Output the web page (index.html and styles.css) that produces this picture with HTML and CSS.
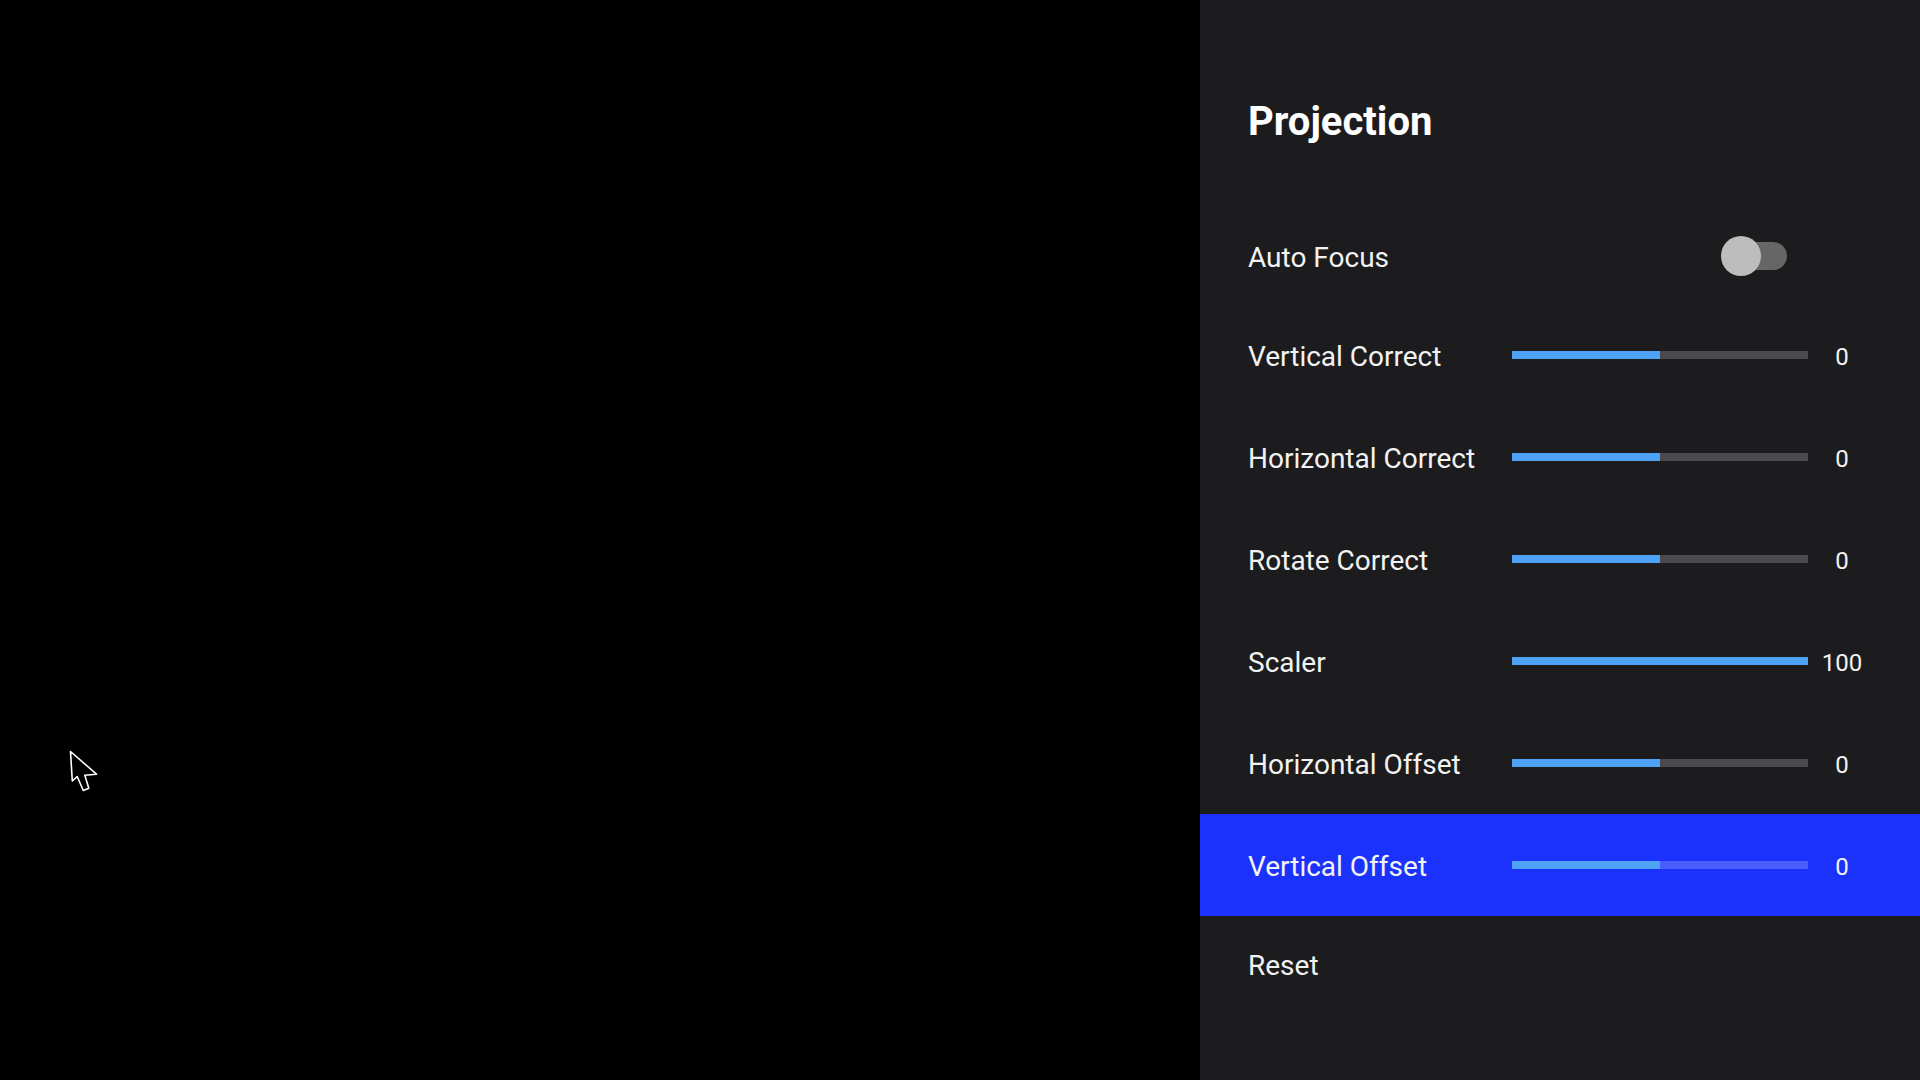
FILE: index.html
```html
<!DOCTYPE html>
<html>
<head>
<meta charset="utf-8">
<title>Projection</title>
<link rel="stylesheet" href="styles.css">
</head>
<body>
<div class="screen">
  <div class="stage">
    <svg class="cursor" width="32" height="44" viewBox="0 0 32 44">
      <path d="M1.5 1.5 L3.3 31 L8.2 26.5 L14.3 40.5 L19.8 38.2 L15.8 25.2 L27.5 24.2 Z" fill="#000" stroke="#fff" stroke-width="1.6" stroke-linejoin="round"/>
    </svg>
  </div>
  <aside class="panel">
    <h1 class="title">Projection</h1>
    <div class="row row-toggle">
      <span class="label">Auto Focus</span>
      <span class="switch"><span class="switch-track"></span><span class="switch-knob"></span></span>
    </div>
    <div class="row">
      <span class="label">Vertical Correct</span>
      <span class="bar"><span class="fill" style="width:50%"></span></span>
      <span class="value">0</span>
    </div>
    <div class="row">
      <span class="label">Horizontal Correct</span>
      <span class="bar"><span class="fill" style="width:50%"></span></span>
      <span class="value">0</span>
    </div>
    <div class="row">
      <span class="label">Rotate Correct</span>
      <span class="bar"><span class="fill" style="width:50%"></span></span>
      <span class="value">0</span>
    </div>
    <div class="row">
      <span class="label">Scaler</span>
      <span class="bar"><span class="fill" style="width:100%"></span></span>
      <span class="value">100</span>
    </div>
    <div class="row">
      <span class="label">Horizontal Offset</span>
      <span class="bar"><span class="fill" style="width:50%"></span></span>
      <span class="value">0</span>
    </div>
    <div class="row row-active">
      <span class="label">Vertical Offset</span>
      <span class="bar"><span class="fill" style="width:50%"></span></span>
      <span class="value">0</span>
    </div>
    <div class="row row-reset">
      <span class="label">Reset</span>
    </div>
  </aside>
</div>
</body>
</html>
```
FILE: styles.css
```css
* { box-sizing: border-box; }
html, body {
  margin: 0;
  padding: 0;
  width: 1920px;
  height: 1080px;
  overflow: hidden;
  background: #000;
  font-family: Roboto, "Liberation Sans", sans-serif;
}
.screen {
  display: flex;
  width: 1920px;
  height: 1080px;
}
.stage {
  position: relative;
  width: 1200px;
  height: 1080px;
  background: #000;
}
.cursor {
  position: absolute;
  left: 69px;
  top: 750px;
}
.panel {
  width: 720px;
  height: 1080px;
  background: #1c1c1e;
  padding-top: 96px;
  display: flex;
  flex-direction: column;
}
.title {
  margin: 0 0 56px 48px;
  padding-top: 2px;
  font-size: 40px;
  line-height: 48px;
  font-weight: 700;
  color: #ffffff;
}
.row {
  display: flex;
  align-items: center;
  height: 102px;
  padding-left: 48px;
  color: #f2f2f2;
  font-size: 28px;
}
.label {
  width: 264px;
  flex: none;
  line-height: 34px;
  padding-top: 3px;
}
.row-toggle {
  padding-top: 6px;
  padding-right: 133px;
}
.row-toggle .label { flex: 1; }
.switch {
  position: relative;
  width: 66px;
  height: 40px;
  flex: none;
}
.switch-track {
  position: absolute;
  left: 4px;
  right: 0;
  top: 6px;
  height: 28px;
  border-radius: 14px;
  background: #666667;
}
.switch-knob {
  position: absolute;
  left: 0;
  top: 0;
  width: 40px;
  height: 40px;
  border-radius: 50%;
  background: #bdbdbd;
}
.bar {
  width: 296px;
  height: 8px;
  flex: none;
  background: #4b4b4d;
  display: flex;
}
.fill {
  height: 100%;
  background: #4fa3f7;
}
.value {
  width: 68px;
  text-align: center;
  font-size: 24px;
  line-height: 30px;
  padding-top: 3px;
}
.row-active {
  background: #1b32fc;
}
.row-active .bar {
  background: #4a5dfd;
}
.row-reset {
  height: 96px;
}
```
